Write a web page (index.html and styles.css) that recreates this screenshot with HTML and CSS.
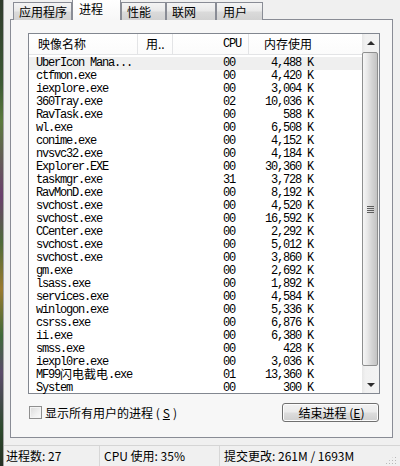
FILE: index.html
```html
<!DOCTYPE html>
<html lang="zh-CN">
<head>
  <meta charset="utf-8" />
  <title>Windows 任务管理器</title>
  <link rel="stylesheet" href="styles.css">
</head>
<body>

<div class="screen">
  <div class="wallpaper"></div>
  <div class="window">
    <div class="tabs">
      <div class="tab t-apps">应用程序</div>
      <div class="tab active">进程</div>
      <div class="tab t-perf">性能</div>
      <div class="tab t-net">联网</div>
      <div class="tab t-users">用户</div>
    </div>

    <div class="panel">
      <div class="list">
        <div class="list-main">
          <div class="list-head">
            <div class="hcol name">映像名称</div>
            <div class="hcol user">用..</div>
            <div class="hcol cpu mono">CPU</div>
            <div class="hcol mem">内存使用</div>
          </div>
          <div class="rows">
            <div class="row focus"><span class="name">UberIcon Mana...</span><span></span><span class="cpu">00</span><span class="mem">4,488 K</span></div>
            <div class="row"><span class="name">ctfmon.exe</span><span></span><span class="cpu">00</span><span class="mem">4,420 K</span></div>
            <div class="row"><span class="name">iexplore.exe</span><span></span><span class="cpu">00</span><span class="mem">3,004 K</span></div>
            <div class="row"><span class="name">360Tray.exe</span><span></span><span class="cpu">02</span><span class="mem">10,036 K</span></div>
            <div class="row"><span class="name">RavTask.exe</span><span></span><span class="cpu">00</span><span class="mem">588 K</span></div>
            <div class="row"><span class="name">wl.exe</span><span></span><span class="cpu">00</span><span class="mem">6,508 K</span></div>
            <div class="row"><span class="name">conime.exe</span><span></span><span class="cpu">00</span><span class="mem">4,152 K</span></div>
            <div class="row"><span class="name">nvsvc32.exe</span><span></span><span class="cpu">00</span><span class="mem">4,184 K</span></div>
            <div class="row"><span class="name">Explorer.EXE</span><span></span><span class="cpu">00</span><span class="mem">30,360 K</span></div>
            <div class="row"><span class="name">taskmgr.exe</span><span></span><span class="cpu">31</span><span class="mem">3,728 K</span></div>
            <div class="row"><span class="name">RavMonD.exe</span><span></span><span class="cpu">00</span><span class="mem">8,192 K</span></div>
            <div class="row"><span class="name">svchost.exe</span><span></span><span class="cpu">00</span><span class="mem">4,520 K</span></div>
            <div class="row"><span class="name">svchost.exe</span><span></span><span class="cpu">00</span><span class="mem">16,592 K</span></div>
            <div class="row"><span class="name">CCenter.exe</span><span></span><span class="cpu">00</span><span class="mem">2,292 K</span></div>
            <div class="row"><span class="name">svchost.exe</span><span></span><span class="cpu">00</span><span class="mem">5,012 K</span></div>
            <div class="row"><span class="name">svchost.exe</span><span></span><span class="cpu">00</span><span class="mem">3,860 K</span></div>
            <div class="row"><span class="name">gm.exe</span><span></span><span class="cpu">00</span><span class="mem">2,692 K</span></div>
            <div class="row"><span class="name">lsass.exe</span><span></span><span class="cpu">00</span><span class="mem">1,892 K</span></div>
            <div class="row"><span class="name">services.exe</span><span></span><span class="cpu">00</span><span class="mem">4,584 K</span></div>
            <div class="row"><span class="name">winlogon.exe</span><span></span><span class="cpu">00</span><span class="mem">5,336 K</span></div>
            <div class="row"><span class="name">csrss.exe</span><span></span><span class="cpu">00</span><span class="mem">6,876 K</span></div>
            <div class="row"><span class="name">ii.exe</span><span></span><span class="cpu">00</span><span class="mem">6,380 K</span></div>
            <div class="row"><span class="name">smss.exe</span><span></span><span class="cpu">00</span><span class="mem">428 K</span></div>
            <div class="row"><span class="name">iexpl0re.exe</span><span></span><span class="cpu">00</span><span class="mem">3,036 K</span></div>
            <div class="row"><span class="name">MF99<span class="cj">闪电截电</span>.exe</span><span></span><span class="cpu">01</span><span class="mem">13,360 K</span></div>
            <div class="row"><span class="name">System</span><span></span><span class="cpu">00</span><span class="mem">300 K</span></div>
          </div>
        </div>

        <div class="scrollbar">
          <div class="sb-btn"><span class="arrow up"></span></div>
          <div class="sb-thumb"><span class="grip"></span></div>
          <div class="sb-track"></div>
          <div class="sb-btn"><span class="arrow down"></span></div>
        </div>
      </div>

      <div class="panel-foot">
        <label class="check"><span class="box"></span>显示所有用户的进程 (<u>S</u>)</label>
        <button class="end-btn" type="button">结束进程 (<u>E</u>)</button>
      </div>
    </div>

    <div class="status">
      <div class="cell c-count">进程数: 27</div>
      <div class="cell c-cpu">CPU 使用: 35%</div>
      <div class="cell c-commit">提交更改: 261M / 1693M</div>
      <div class="size-grip"></div>
    </div>
  </div>
</div>

</body>
</html>
```

FILE: styles.css
```css
* {
  box-sizing: border-box;
}

body {
  margin: 0;
  font-family: "Noto Sans CJK SC", "Liberation Sans", sans-serif;
  font-size: 12px;
  color: #000;
  background: #f0f0f0;
}

.screen {
  display: flex;
  width: 400px;
  height: 466px;
  overflow: hidden;
}

.wallpaper {
  width: 3px;
  background: linear-gradient(#2f3b2c, #3d5a34 18%, #5b7a3c 26%, #6a3f6e 42%, #4e6b39 52%, #9a7a2e 62%, #3f6a3a 72%, #5a4a6a 80%, #2d4a2c 92%, #253023);
}

.window {
  flex: 1;
  display: flex;
  flex-direction: column;
  background: #f0f0f0;
  border-left: 1px solid #a3a3a3;
}

/* tabs */
.tabs {
  display: flex;
  align-items: flex-end;
  height: 20px;
  padding-left: 9px;
  margin-bottom: -1px;
  position: relative;
  z-index: 1;
}

.tab {
  height: 18px;
  line-height: 17px;
  padding-left: 5px;
  border: 1px solid #898c95;
  border-bottom: none;
  background: linear-gradient(#f4f4f4, #e9e9e9 45%, #dadada 55%, #d2d2d2);
  white-space: nowrap;
}

.t-apps { width: 59px; }
.t-perf { width: 45px; }
.t-net { width: 50px; }
.t-users { width: 47px; padding-left: 6px; }

.tab.active {
  width: 49px;
  height: 21px;
  line-height: 17px;
  padding-left: 6px;
  background: linear-gradient(#ffffff, #f7f7f7);
  border-color: #898c95;
}

/* panel */
.panel {
  margin: 0 7px 7px 6px;
  padding: 13px 12px 16px 17px;
  border: 1px solid #898c95;
  background: #f7f7f7;
}

.list {
  display: flex;
  height: 361px;
  border: 1px solid #828790;
  background: #fff;
}

.list-main {
  flex: 1;
}

.list-head {
  display: grid;
  grid-template-columns: 109px 35px 76px 69px;
  height: 21px;
  border-bottom: 1px solid #e3e4e6;
  background: linear-gradient(#ffffff, #fbfbfb);
}

.hcol {
  line-height: 20px;
  border-right: 1px solid #e3e4e6;
  white-space: nowrap;
}

.hcol.name { padding-left: 9px; }
.hcol.user { padding-left: 8px; }
.hcol.cpu { padding-left: 50px; }
.hcol.mem { padding-left: 15px; border-right: none; }

.mono,
.rows {
  font-family: "Liberation Mono", "Noto Sans CJK SC", monospace;
  letter-spacing: -1.2px;
}

.rows {
  padding-top: 2px;
  font-size: 12px;
}

.row {
  display: grid;
  grid-template-columns: 109px 35px 76px 69px;
  height: 13px;
  line-height: 13px;
  white-space: nowrap;
}

.row.focus {
  background: #efefef;
}

.row .name { padding-left: 7px; }
.row .cpu { padding-left: 50px; }
.row .mem { text-align: right; padding-right: 5px; }

.cj {
  line-height: 0;
  vertical-align: -1px;
  font-family: "Noto Sans CJK SC", sans-serif;
  letter-spacing: 0;
  font-size: 12px;
}

/* scrollbar */
.scrollbar {
  width: 17px;
  display: flex;
  flex-direction: column;
  background: linear-gradient(to right, #e7e7e7, #f1f1f1 20%, #f3f3f3);
}

.sb-btn {
  height: 17px;
  display: flex;
  align-items: center;
  justify-content: center;
}

.arrow {
  width: 0;
  height: 0;
  border-left: 4px solid transparent;
  border-right: 4px solid transparent;
}

.arrow.up { border-bottom: 4px solid #2c2c2c; }
.arrow.down { border-top: 4px solid #2c2c2c; }

.sb-thumb {
  height: 314px;
  margin: 1px 1px 0 0;
  border: 1px solid #8e8f8f;
  border-radius: 2px;
  background: linear-gradient(to right, #f6f6f6, #e9e9e9 30%, #d6d6d6 60%, #c3c3c3);
  display: flex;
  align-items: center;
  justify-content: center;
}

.grip {
  width: 7px;
  height: 7px;
  background: repeating-linear-gradient(#5e5e5e 0 1px, transparent 1px 2px);
}

.sb-track {
  flex: 1;
}

/* footer of the panel */
.panel-foot {
  display: flex;
  align-items: center;
  justify-content: space-between;
  height: 18px;
  margin-top: 9px;
  padding: 0 1px 0 1px;
}

.check {
  display: flex;
  align-items: center;
  gap: 3px;
  white-space: nowrap;
}

.box {
  width: 13px;
  height: 13px;
  border: 1px solid #8f8f8f;
  background: linear-gradient(135deg, #d9d9d9, #f0f0f0 60%, #fbfbfb);
  box-shadow: inset 0 0 0 1px #f4f4f4;
}

.end-btn {
  width: 97px;
  height: 19px;
  margin-top: 1px;
  padding: 0 0 0 2px;
  font-family: "Noto Sans CJK SC", sans-serif;
  font-size: 12px;
  line-height: 16px;
  color: #000;
  border: 1px solid #707070;
  border-radius: 3px;
  background: linear-gradient(#f2f2f2, #ebebeb 48%, #dddddd 52%, #cfcfcf);
  box-shadow: inset 0 0 0 1px #fcfcfc;
}

u {
  text-underline-offset: 1px;
}

/* status bar */
.status {
  display: flex;
  height: 21px;
  border-top: 1px solid #d5d5d5;
  background: #f0f0f0;
  line-height: 20px;
}

.cell {
  border-right: 1px solid #d7d7d7;
  white-space: nowrap;
}

.c-count { width: 96px; padding-left: 2px; }
.c-cpu { width: 120px; padding-left: 4px; }
.c-commit { flex: 1; padding-left: 4px; border-right: none; }

.size-grip {
  width: 13px;
  height: 11px;
  margin: 7px 2px 0 0;
  background:
    radial-gradient(circle, #b8b8b8 0.8px, transparent 1px) 0 0 / 3px 3px;
  clip-path: polygon(100% 0, 100% 100%, 0 100%);
}
```
